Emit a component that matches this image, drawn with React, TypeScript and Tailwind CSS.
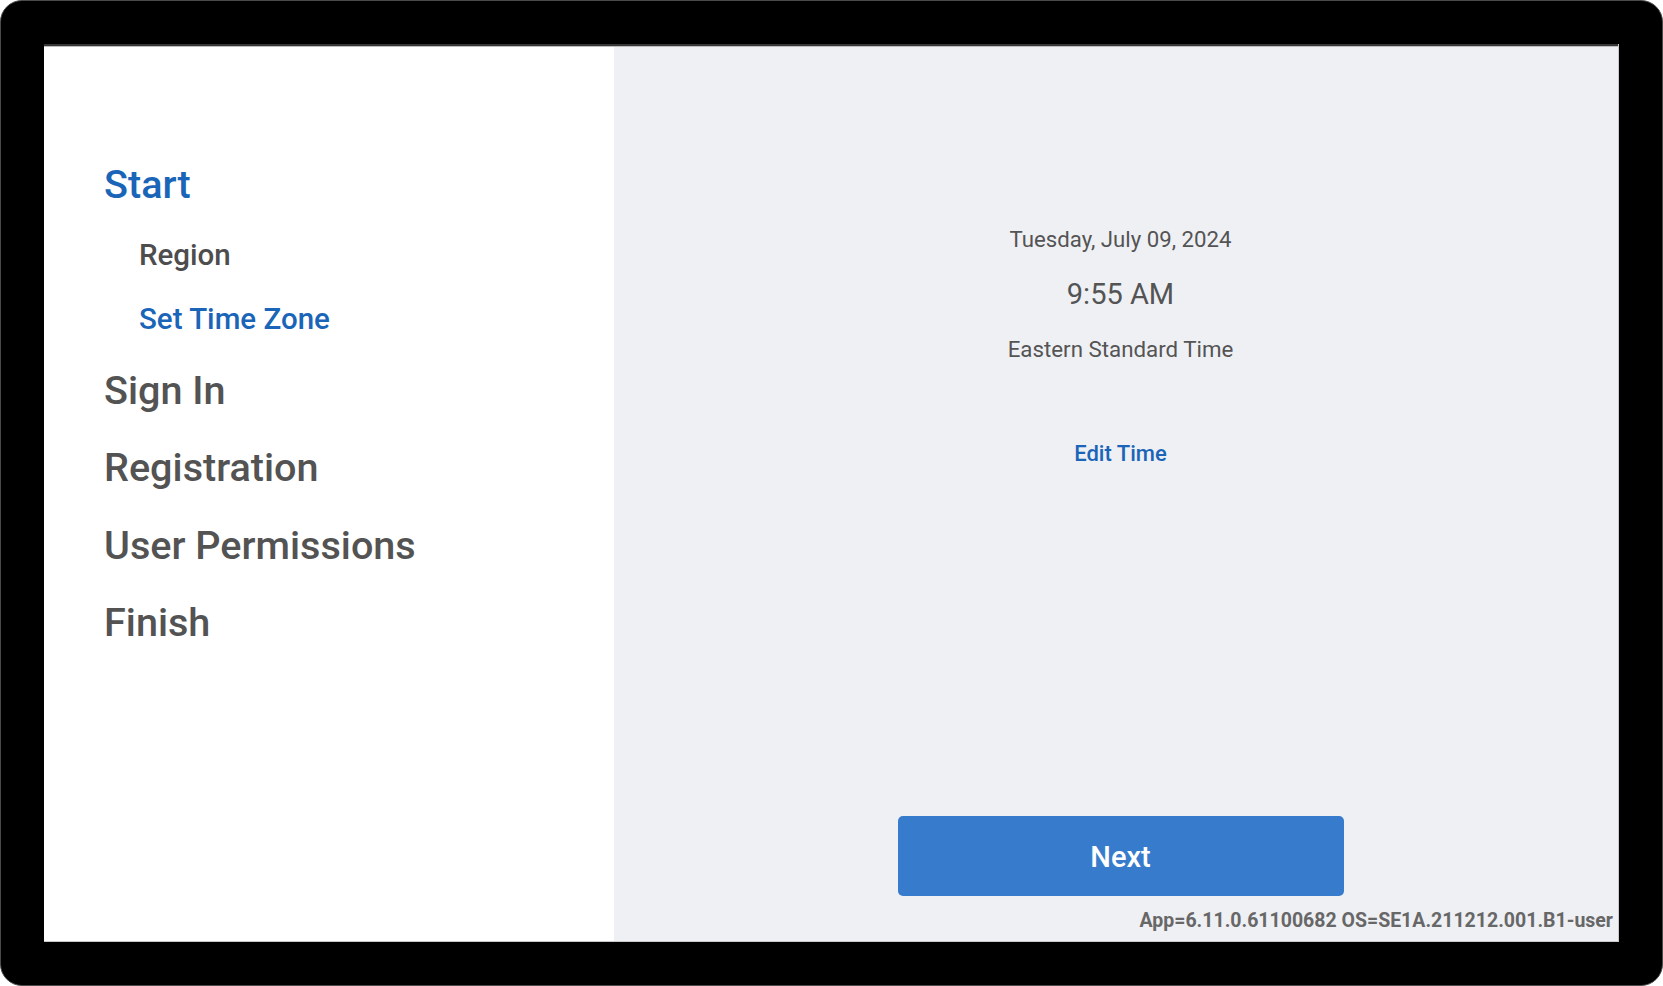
const steps = [
  { label: "Sign In" },
  { label: "Registration" },
  { label: "User Permissions" },
  { label: "Finish" },
];

export default function App() {
  return (
    <div className="w-[1663px] h-[986px] bg-white font-['Roboto',sans-serif]">
      <div className="w-full h-full rounded-[22px] bg-black border border-[#4a4a4a] pt-[43px] px-[43px] pb-[43px] flex flex-col">
        <div className="flex-1 flex flex-col border-b border-r border-[#c9c9c9]">
          <div className="h-[2px] bg-[#363636]" />
          <div className="h-[1px] bg-[#bdbdbd]" />
          <div className="flex-1 flex">
            {/* steps sidebar */}
            <div className="w-[570px] bg-white pt-[96px] pl-[60px]">
              <div className="h-[83px] leading-[83px] text-[39.6px] font-medium text-[#1a65b8]">Start</div>
              <div className="pl-[35px]">
                <div className="h-[62px] leading-[62px] text-[29.5px] font-medium text-[#4d4d4d] -mt-[2px]">Region</div>
                <div className="h-[63px] leading-[63px] text-[29.5px] font-medium text-[#1a65b8] mt-[2px]">Set Time Zone</div>
              </div>
              <div className="pt-[1px]">
                {steps.map((s) => (
                  <div key={s.label} className="h-[77.3px] leading-[77.3px] text-[39.6px] font-medium text-[#535353]">
                    {s.label}
                  </div>
                ))}
              </div>
            </div>

            {/* time zone panel */}
            <div className="flex-1 bg-[#eff0f4] flex flex-col">
              <div className="flex flex-col items-center pt-[176px] pl-[9px] text-[#545454]">
                <div className="h-[32px] leading-[32px] text-[22.2px]">Tuesday, July 09, 2024</div>
                <div className="mt-[19px] h-[40px] leading-[40px] text-[29px]">9:55 AM</div>
                <div className="mt-[19px] h-[32px] leading-[32px] text-[22.3px]">Eastern Standard Time</div>
                <div className="mt-[73px] h-[32px] leading-[32px] text-[22px] font-medium text-[#1a65b8]">Edit Time</div>
              </div>
              <div className="mt-auto flex flex-col">
                <div className="flex justify-center pl-[9px]">
                  <button className="w-[446px] h-[80px] pt-[3px] rounded-[5px] bg-[#367bcc] text-white text-[29px] font-medium">
                    Next
                  </button>
                </div>
                <div className="mt-[12px] mb-[7px] pr-[5px] text-right h-[26px] leading-[26px] text-[19.5px] font-bold text-[#676767]">
                  App=6.11.0.61100682 OS=SE1A.211212.001.B1-user
                </div>
              </div>
            </div>
          </div>
        </div>
      </div>
    </div>
  );
}
